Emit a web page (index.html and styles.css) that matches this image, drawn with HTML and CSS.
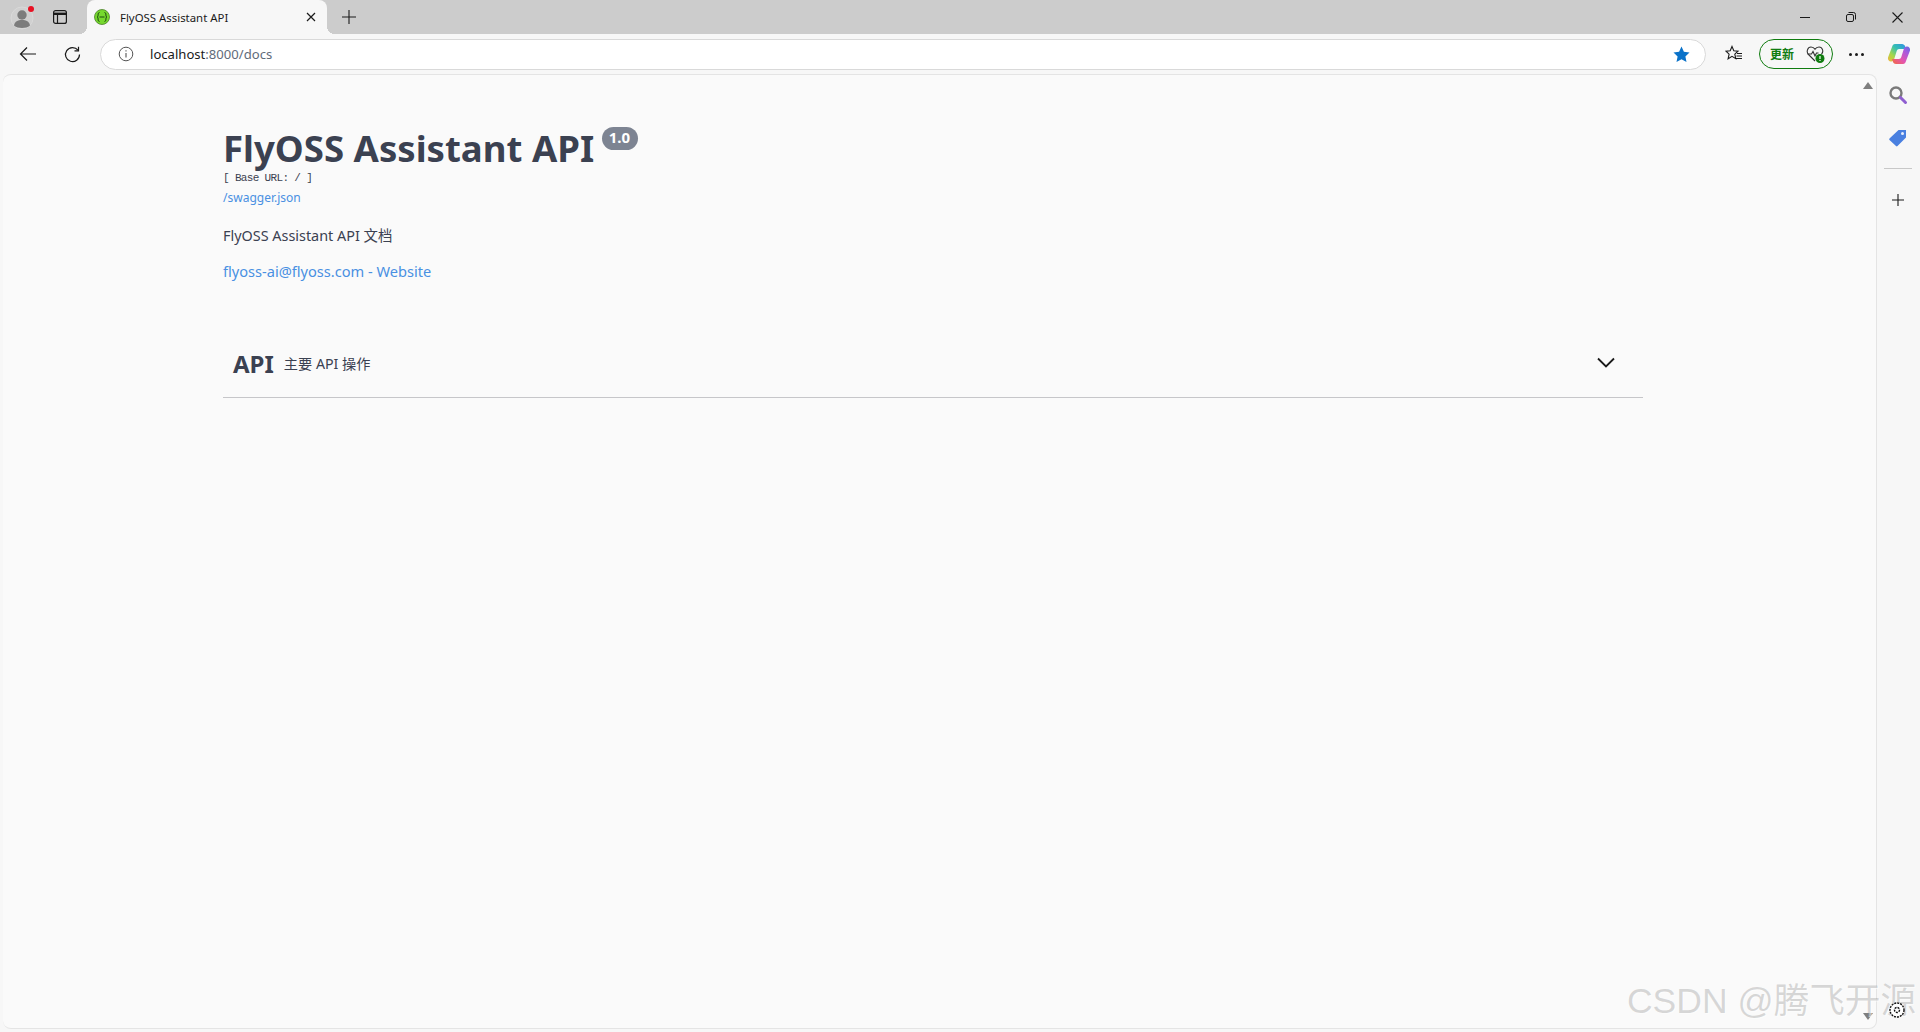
FILE: index.html
```html
<!DOCTYPE html>
<html lang="en">
<head>
    <meta charset="UTF-8">
    <title>FlyOSS Assistant API</title>
    <link rel="stylesheet" href="styles.css">
</head>
<body>
    <!-- Tab strip -->
    <div class="tabstrip">
        <div class="avatar">
            <svg width="24" height="24" viewBox="0 0 24 24">
                <circle cx="12" cy="12" r="11" fill="#d0d0d0" stroke="#d9d9d9"/>
                <circle cx="12" cy="9" r="4.700" fill="#7c7c7c"/>
                <path d="M4 19.500c.6-3.800 3.700-5.500 8-5.500s7.400 1.700 8 5.500c-2 1.800-5 2.500-8 2.500s-6-.7-8-2.500z" fill="#7c7c7c"/>
            </svg>
            <span class="avatar-dot"></span>
        </div>
        <button class="strip-btn" aria-label="Tab actions">
            <svg width="16" height="16" viewBox="0 0 16 16" fill="none" stroke="#1a1a1a" stroke-width="1.200">
                <rect x="1.600" y="1.600" width="12.800" height="12.800" rx="2"/>
                <path d="M1.600 4.800h12.800" stroke-width="2.400"/>
                <path d="M5.500 5v9.400"/>
            </svg>
        </button>
        <div class="tab">
            <svg class="favicon" width="16" height="16" viewBox="0 0 16 16">
                <circle cx="8" cy="8" r="7.500" fill="#76d92e" stroke="#4a7f2a" stroke-width="0.800"/>
                <path d="M5.500 3.500c-1.800 0-1.300 2.500-1.500 3.500-.1.600-.5 1-1 1 .5 0 .9.400 1 1 .2 1-.3 3.500 1.500 3.500M10.500 3.500c1.800 0 1.300 2.500 1.500 3.500.1.600.5 1 1 1-.5 0-.9.400-1 1-.2 1 .3 3.500-1.500 3.500M5.500 8h5" fill="none" stroke="#1f4a12" stroke-width="1"/>
            </svg>
            <span class="tab-title">FlyOSS Assistant API</span>
            <svg class="tab-close" width="10" height="10" viewBox="0 0 10 10" stroke="#1a1a1a" stroke-width="1.200">
                <path d="M1 1l8 8M9 1l-8 8"/>
            </svg>
        </div>
        <button class="strip-btn new-tab" aria-label="New tab">
            <svg width="14" height="14" viewBox="0 0 14 14" stroke="#1a1a1a" stroke-width="1.100">
                <path d="M7 0v14M0 7h14"/>
            </svg>
        </button>
        <div class="window-btns">
            <svg width="10" height="10" viewBox="0 0 10 10" stroke="#1a1a1a"><path d="M0 5.500h10"/></svg>
            <svg width="10" height="10" viewBox="0 0 10 10" fill="none" stroke="#1a1a1a">
                <rect x="0.500" y="2.500" width="7" height="7" rx="1.500"/>
                <path d="M2.500 .5h5a2 2 0 0 1 2 2v5"/>
            </svg>
            <svg width="11" height="11" viewBox="0 0 11 11" stroke="#1a1a1a" stroke-width="1.100"><path d="M.5 .5l10 10M10.500 .5l-10 10"/></svg>
        </div>
    </div>

    <!-- Address bar row -->
    <div class="toolbar">
        <button class="nav-btn" aria-label="Back">
            <svg width="18" height="16" viewBox="0 0 18 16" fill="none" stroke="#1a1a1a" stroke-width="1.200">
                <path d="M17 8H1.500M8 1.500L1.500 8 8 14.500"/>
            </svg>
        </button>
        <button class="nav-btn" aria-label="Reload">
            <svg width="17" height="17" viewBox="0 0 17 17" fill="none" stroke="#1a1a1a" stroke-width="1.200">
                <path d="M14 4.200A7 7 0 1 0 15.500 8.500"/>
                <path d="M14.500 .8v4h-4"/>
            </svg>
        </button>
        <div class="urlbar">
            <svg class="info-icon" width="16" height="16" viewBox="0 0 16 16" fill="none" stroke="#555">
                <circle cx="8" cy="8" r="6.800"/>
                <path d="M8 7v4.500M8 4.300v1.300" stroke-width="1.100"/>
            </svg>
            <span class="url"><span class="url-host">localhost</span>:8000/docs</span>
            <svg class="star" width="17" height="17" viewBox="0 0 17 17"><path d="M8.500 .6l2.400 5.200 5.600.7-4.100 3.900 1.100 5.600-5-2.800-5 2.800 1.100-5.600L.5 6.500l5.600-.7z" fill="#0a72c9"/></svg>
        </div>
        <button class="tool-btn" aria-label="Favorites">
            <svg width="18" height="18" viewBox="0 0 18 18" fill="none" stroke="#1a1a1a" stroke-width="1.100">
                <path d="M7 1.500l1.800 4.300 4.200.4-3.200 2.900 1 4.500L7 11.300l-3.900 2.500 1-4.700L1 6.200l4.200-.4z"/>
                <path d="M12 8.500h5M11.500 11h5.500M10 13.500h7" stroke-width="1"/>
            </svg>
        </button>
        <div class="update-pill">
            <span>更新</span>
            <svg width="20" height="20" viewBox="0 0 20 20">
                <path d="M9 17L2.500 10.500C0 8 1.500 3 5 3c2 0 3.200 1 4 2.300C9.800 4 11 3 13 3c3.500 0 5 4.500 2.500 7" fill="none" stroke="#333" stroke-width="1.100"/>
                <path d="M1.500 10h4l1.500-2.500 2 4.500 1.500-3h2" fill="none" stroke="#333" stroke-width="1.100"/>
                <circle cx="14" cy="14.500" r="4.500" fill="#107c10"/>
                <path d="M14 12v3M14 16v1" stroke="#fff" stroke-width="1.200"/>
            </svg>
        </div>
        <button class="tool-btn more" aria-label="More">
            <span></span><span></span><span></span>
        </button>
        <button class="tool-btn copilot" aria-label="Copilot">
            <svg width="24" height="24" viewBox="0 0 24 24">
                <defs>
                    <linearGradient id="copA" x1="1" y1="0" x2="0" y2="1">
                        <stop offset="0" stop-color="#2f8fe8"/>
                        <stop offset="0.400" stop-color="#35c0b0"/>
                        <stop offset="0.700" stop-color="#a6d84a"/>
                        <stop offset="1" stop-color="#f7b23b"/>
                    </linearGradient>
                    <linearGradient id="copB" x1="1" y1="0" x2="0" y2="1">
                        <stop offset="0" stop-color="#f26b3a"/>
                        <stop offset="0.400" stop-color="#e455b0"/>
                        <stop offset="0.750" stop-color="#a45be0"/>
                        <stop offset="1" stop-color="#5a6fe0"/>
                    </linearGradient>
                </defs>
                <path d="M8 2h7c1.500 0 2.500 1 3 2l1 3h-7c-1 0-2 .8-2.300 2l-2.500 8c-.4 1.500-1.500 2.500-3 2.500H4c-2 0-3.500-2-3-4L5 5c.5-2 1.500-3 3-3z" fill="url(#copA)"/>
                <path d="M8 2h7c1.500 0 2.500 1 3 2l1 3h-7c-1 0-2 .8-2.300 2l-2.500 8c-.4 1.500-1.500 2.500-3 2.500H4c-2 0-3.500-2-3-4L5 5c.5-2 1.500-3 3-3z" fill="url(#copB)" transform="rotate(180 12 12)"/>
            </svg>
        </button>
    </div>

    <div class="window-body">
        <main class="page">
            <div class="docs">
                <!-- API info -->
                <section class="info">
                    <h2 class="title">FlyOSS Assistant API <span class="version">1.0</span></h2>
                    <div class="base-url">[ Base URL: / ]</div>
                    <a class="spec-link" href="#">/swagger.json</a>
                    <p class="description">FlyOSS Assistant API 文档</p>
                    <a class="contact" href="#">flyoss-ai@flyoss.com - Website</a>
                </section>

                <!-- Operations -->
                <section class="opblock-tag">
                    <span class="tag-name">API</span>
                    <span class="tag-desc">主要 API 操作</span>
                    <svg class="chevron" width="20" height="12" viewBox="0 0 20 12" fill="none" stroke="#1a1a1a" stroke-width="1.800">
                        <path d="M2 1.500l8 8 8-8"/>
                    </svg>
                </section>
            </div>
            <div class="scrollbar">
                <span class="arrow-up"></span>
                <span class="arrow-down"></span>
            </div>
        </main>

        <aside class="sidebar">
            <svg width="20" height="20" viewBox="0 0 20 20" fill="none">
                <circle cx="8" cy="8" r="5.500" stroke="#7a7a7a" stroke-width="2.400"/>
                <path d="M12.500 12.500l5 5" stroke="#8f5fd0" stroke-width="3" stroke-linecap="round"/>
            </svg>
            <svg width="20" height="20" viewBox="0 0 20 20">
                <path d="M1.500 11.500L10.500 3h7.500v7.500l-8.500 8.500c-.5.500-1 .500-1.500 0l-6.500-6c-.5-.500-.5-1 0-1.500z" fill="#4a80e0"/>
                <circle cx="14.500" cy="6.500" r="1.500" fill="#e8eefb"/>
            </svg>
            <span class="sidebar-line"></span>
            <svg width="14" height="14" viewBox="0 0 14 14" stroke="#1a1a1a" stroke-width="1.100">
                <path d="M7 1v12M1 7h12"/>
            </svg>
        </aside>
    </div>

    <!-- Image watermark and mouse cursor sit on top of the window -->
    <div class="watermark">CSDN @腾飞开源</div>
    <svg class="cursor-gear" width="20" height="20" viewBox="0 0 20 20" fill="#fff" stroke="#111" stroke-width="1.400" stroke-dasharray="2 1">
        <circle cx="10" cy="10" r="7"/>
        <circle cx="10" cy="10" r="2.500"/>
    </svg>
</body>
</html>
```

FILE: styles.css
```css
* {
    box-sizing: border-box;
}
html, body {
    height: 100%;
}
body {
    margin: 0;
    overflow: hidden;
    display: flex;
    flex-direction: column;
    background: #f7f7f7;
    font-family: "Noto Sans", "Noto Sans CJK SC", sans-serif;
    color: #3b4151;
}
button {
    border: none;
    background: none;
    padding: 0;
    display: flex;
    align-items: center;
    justify-content: center;
}

/* tab strip */
.tabstrip {
    height: 34px;
    flex: none;
    display: flex;
    align-items: center;
    background: #cccccc;
    padding-left: 10px;
}
.avatar {
    position: relative;
    width: 24px;
    height: 24px;
    margin-top: 2px;
}
.avatar-dot {
    position: absolute;
    top: 0;
    right: 0;
    width: 6px;
    height: 6px;
    border-radius: 50%;
    background: #e81123;
}
.strip-btn {
    width: 30px;
    height: 30px;
}
.avatar + .strip-btn {
    margin-left: 11px;
}
.tab {
    position: relative;
    width: 240px;
    height: 34px;
    margin-left: 12px;
    padding: 0 11px 0 7px;
    display: flex;
    align-items: center;
    background: #f7f7f7;
    border-radius: 8px 8px 0 0;
}
.tab::before, .tab::after {
    content: "";
    position: absolute;
    bottom: 0;
    width: 8px;
    height: 8px;
}
.tab::before {
    left: -8px;
    background: radial-gradient(circle at 0 0, transparent 8px, #f7f7f7 8px);
}
.tab::after {
    right: -8px;
    background: radial-gradient(circle at 100% 0, transparent 8px, #f7f7f7 8px);
}
.favicon {
    flex: none;
}
.tab-title {
    margin-left: 10px;
    flex: 1;
    font-size: 11.400px;
    color: #1a1a1a;
}
.new-tab {
    margin-left: 7px;
}
.window-btns {
    margin-left: auto;
    display: flex;
    align-items: center;
    gap: 36px;
    padding-right: 17px;
}

/* address bar row */
.toolbar {
    height: 40px;
    flex: none;
    display: flex;
    align-items: center;
    padding-left: 10px;
}
.nav-btn {
    width: 36px;
    height: 32px;
}
.nav-btn + .nav-btn {
    margin-left: 8px;
}
.urlbar {
    width: 1606px;
    height: 31px;
    margin-left: 10px;
    padding: 0 15px 0 17px;
    display: flex;
    align-items: center;
    background: #fff;
    border: 1px solid #d9d9d9;
    border-radius: 16px;
}
.url {
    margin-left: 16px;
    font-size: 13.100px;
    color: #5f6b7a;
}
.url-host {
    color: #1a1a1a;
}
.star {
    margin-left: auto;
}
.tool-btn {
    width: 32px;
    height: 32px;
}
.urlbar + .tool-btn {
    margin-left: 12px;
}
.update-pill {
    width: 74px;
    height: 30px;
    margin-left: 9px;
    padding: 0 6px 0 10px;
    display: flex;
    align-items: center;
    justify-content: space-between;
    border: 1px solid #107c10;
    border-radius: 15px;
    font-size: 12px;
    font-weight: 700;
    color: #107c10;
}
.more {
    gap: 3px;
    margin-left: 7px;
}
.more span {
    width: 3px;
    height: 3px;
    border-radius: 50%;
    background: #1a1a1a;
}
.copilot {
    margin-left: 11px;
}

/* page area */
.window-body {
    flex: 1;
    min-height: 0;
    display: flex;
    padding: 0 0 3px 3px;
}
.page {
    width: 1874px;
    display: flex;
    background: #fafafa;
    border: 1px solid #e4e4e4;
    border-width: 1px 1px 1px 0;
    border-radius: 8px;
}
.docs {
    flex: 1;
    padding: 0 216px 0 220px;
}
.scrollbar {
    width: 17px;
    flex: none;
    display: flex;
    flex-direction: column;
    justify-content: space-between;
    align-items: center;
    padding: 7px 0 8px;
}
.arrow-up, .arrow-down {
    width: 0;
    height: 0;
    border-left: 5px solid transparent;
    border-right: 5px solid transparent;
}
.arrow-up {
    border-bottom: 7px solid #7f7f7f;
}
.arrow-down {
    border-top: 7px solid #7f7f7f;
}

/* api info */
.info {
    padding-top: 51px;
}
.title {
    margin: 0;
    font-size: 36.600px;
    line-height: 44px;
    font-weight: 700;
    color: #3b4151;
    white-space: nowrap;
}
.version {
    display: inline-block;
    margin-left: -2px;
    margin-top: 1px;
    padding: 1px 8px 3px 7px;
    vertical-align: top;
    font-size: 15px;
    line-height: 19px;
    font-weight: 700;
    color: #fff;
    background: #7d8492;
    border-radius: 12px;
}
.base-url {
    height: 17px;
    font-family: "Liberation Mono", monospace;
    font-size: 11px;
    letter-spacing: -0.660px;
    line-height: 16px;
    color: #3b4151;
}
.spec-link {
    display: block;
    margin-top: 2px;
    font-size: 12px;
    line-height: 17px;
    color: #4990e2;
    text-decoration: none;
}
.description {
    margin: 20px 0 0;
    font-size: 14.400px;
    line-height: 20px;
}
.contact {
    display: block;
    margin-top: 15px;
    font-size: 14.600px;
    line-height: 20px;
    color: #4990e2;
    text-decoration: none;
}

/* operations tag */
.opblock-tag {
    height: 77px;
    margin-top: 40px;
    padding: 8px 27px 0 10px;
    display: flex;
    align-items: center;
    border-bottom: 1px solid #c6c6c9;
}
.tag-name {
    font-size: 24px;
    font-weight: 700;
    color: #3b4151;
}
.tag-desc {
    margin-left: 10px;
    font-size: 14.200px;
}
.chevron {
    margin-left: auto;
}

/* right sidebar */
.sidebar {
    flex: 1;
    display: flex;
    flex-direction: column;
    align-items: center;
    padding: 11px 2px 0 0;
}
.sidebar svg + svg {
    margin-top: 22px;
}
.sidebar-line {
    width: 28px;
    height: 1px;
    margin-top: 21px;
    background: #c8c8c8;
}
.sidebar-line + svg {
    margin-top: 24px;
}

/* overlays */
.watermark {
    position: absolute;
    right: 4px;
    top: 977px;
    font-family: "Liberation Sans", "Noto Sans CJK SC", sans-serif;
    font-size: 35.600px;
    line-height: 48px;
    color: rgba(120, 120, 120, 0.28);
    text-shadow: 1px 1px 0 rgba(255, 255, 255, 0.6);
    white-space: nowrap;
}
.cursor-gear {
    position: absolute;
    left: 1887px;
    top: 1000px;
}
```
